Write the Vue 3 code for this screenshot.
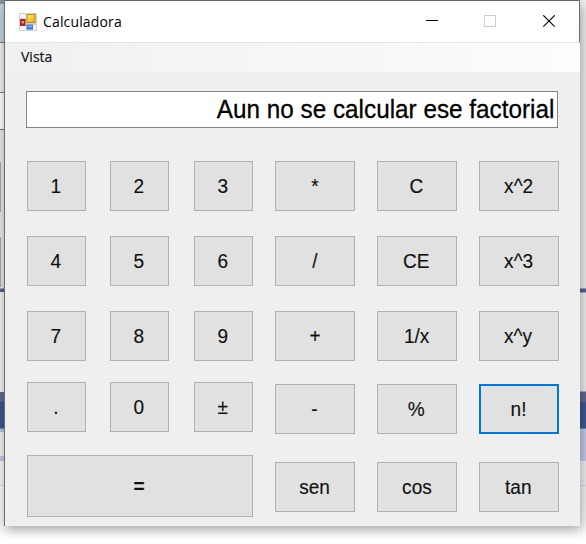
<script setup>
const digits = ['1', '2', '3', '4', '5', '6', '7', '8', '9', '.', '0', '±']
const operations = [
  '*', 'C', 'x^2',
  '/', 'CE', 'x^3',
  '+', '1/x', 'x^y',
  '-', '%', 'n!',
  'sen', 'cos', 'tan',
]
</script>

<template>
  <div class="desktop">
    <div class="edge edge-left"></div>
    <main class="window">
      <header class="titlebar">
        <svg class="app-icon" width="18" height="18" viewBox="0 0 18 18">
          <defs>
            <linearGradient id="gold" x1="0" y1="0" x2="1" y2="1">
              <stop offset="0" stop-color="#ffe680" />
              <stop offset="1" stop-color="#f0b000" />
            </linearGradient>
          </defs>
          <rect width="18" height="18" fill="#d2d2d2" />
          <rect x="1" y="1" width="6" height="4" fill="#f6f6f6" />
          <rect x="1" y="13" width="6" height="4" fill="#f6f6f6" />
          <rect x="14" y="12" width="3" height="5" fill="#f6f6f6" />
          <rect x="1" y="6" width="5.5" height="7" fill="#a92a24" />
          <rect x="2.5" y="8" width="2.5" height="2.5" fill="#e88a80" />
          <rect x="7.5" y="1" width="9" height="9" fill="#c08a10" />
          <rect x="8.5" y="2" width="7" height="7" fill="url(#gold)" />
          <rect x="7.5" y="11.5" width="6.5" height="5" fill="#3f74d0" />
          <rect x="8.5" y="12.5" width="4.5" height="2" fill="#78a8f4" />
        </svg>
        <h1 class="title">Calculadora</h1>
        <svg class="controls" width="131" height="14" viewBox="0 0 131 14">
          <path d="M0 5.5H12" stroke="#000" fill="none" />
          <rect x="58.5" y="0.5" width="11" height="11" stroke="#ccc" fill="none" />
          <path d="M117.3 0.3L128.7 11.7M128.7 0.3L117.3 11.7" stroke="#000" stroke-width="1.1" fill="none" />
        </svg>
      </header>
      <nav class="menu"><span class="menu-text">Vista</span></nav>
      <div class="display"><span class="display-text">Aun no se calcular ese factorial</span></div>
      <section class="keys">
        <div class="numbers">
          <button v-for="d in digits" :key="d" class="key"><span class="label">{{ d }}</span></button>
          <button class="key equals"><span class="label">=</span></button>
        </div>
        <div class="operations">
          <button v-for="o in operations" :key="o" class="key" :class="{ focused: o === 'n!' }"><span class="label">{{ o }}</span></button>
        </div>
      </section>
    </main>
    <div class="edge edge-right"></div>
  </div>
</template>

<style>
body {
  margin: 0;
  overflow: hidden;
  background: #fff;
}
</style>

<style scoped>
.desktop {
  box-sizing: border-box;
  display: flex;
  width: 586px;
  height: 544px;
  overflow: hidden;
  background: #fff;
}
.edge {
  height: 544px;
}
.edge-left {
  width: 4px;
  background:
    linear-gradient(#aaa, #aaa) 0 162px / 1px 50px no-repeat,
    linear-gradient(#aaa, #aaa) 0 237px / 1px 50px no-repeat,
    linear-gradient(
      #8d9299 4px, #c3d1df 4px 42px, #777 42px 43px, #f0f0f0 43px 92px, #888 92px 93px,
      #fff 93px 129px, #777 129px 130px, #eaeaec 130px 288px, #56658f 289px 292px,
      #f2f3f5 292px 392px, #5e6996 392px 402px, #40568e 402px 428px, #b9c6e4 429px 432px,
      #f2f2f5 432px 456px, #c3cae8 456px 461px, #f7f7fb 461px 485px, #dcdeee 485px 486px,
      #fafafa 486px 520px, #fff 540px);
}
.edge-right {
  width: 6px;
  background: linear-gradient(
    #f2f2f2, #ededed 20px 288px, #98a3c0 288px 289px, #53638f 289px 292px, #a2abc6 292px 293px,
    #eee 293px 391px, #a2abc6 391px 392px, #5e6892 392px 402px, #40568e 402px 428px,
    #7888b0 428px 429px, #c4cbe8 429px 461px, #f0f0f2 461px 485px, #d9dae8 485px 486px,
    #f2f2f2 486px 505px, #fff 541px);
}
.window {
  position: relative;
  box-sizing: border-box;
  width: 576px;
  height: 526px;
  border-left: 1px solid #6d6d6d;
  background: #efefef;
  box-shadow: 1px 4px 11px rgba(0, 0, 0, 0.36);
  font-family: "Liberation Sans", Arial, sans-serif;
}
.titlebar {
  box-sizing: border-box;
  display: flex;
  align-items: center;
  height: 43px;
  padding: 0 22px 0 14px;
  border-top: 1px solid #666;
  border-right: 1px solid #6d6d6d;
  border-bottom: 1px solid #e4e4e4;
  background: #fff;
}
.title {
  margin: 0 0 0 6px;
  font: 400 14px/20px "Open Sans", "Noto Sans", sans-serif;
  letter-spacing: 0.15px;
  color: #000;
}
.controls {
  margin-left: auto;
}
.menu {
  height: 29px;
  padding-left: 16px;
  background: linear-gradient(90deg, #f0f0f0, #fdfdfd);
  font: 400 14px/27px "Open Sans", "Noto Sans", sans-serif;
  color: #111;
}
.menu-text {
  display: inline-block;
  -webkit-text-stroke: 0.2px #111;
}
.display {
  box-sizing: border-box;
  width: 532px;
  height: 37px;
  margin: 19px 0 0 21px;
  padding-right: 3px;
  border: 1px solid #858585;
  background: #fff;
  font-size: 26px;
  line-height: 35px;
  text-align: right;
  white-space: nowrap;
  color: #000;
}
.display-text {
  display: inline-block;
  transform: scaleX(0.934);
  transform-origin: right;
  -webkit-text-stroke: 0.3px #000;
}
.keys {
  display: flex;
  gap: 22px;
  padding: 33px 0 0 22px;
}
.numbers {
  display: grid;
  grid-template-columns: 59px 59px 60px;
  grid-template-rows: 50px 50px 50px 50px 62px;
  column-gap: 24px;
  row-gap: 25px;
  width: 226px;
}
.numbers .key:nth-child(3n) {
  margin-left: 1px;
}
.numbers .key:nth-child(n + 10):nth-child(-n + 12) {
  margin-top: -4px;
  margin-bottom: 4px;
}
.operations {
  display: grid;
  grid-template-columns: repeat(3, 80px);
  grid-template-rows: repeat(5, 50px);
  column-gap: 22px;
  row-gap: 25px;
}
.key {
  display: flex;
  align-items: center;
  justify-content: center;
  box-sizing: border-box;
  min-width: 0;
  margin: 0;
  padding: 0;
  border: 1px solid #b0b0b0;
  background: #e1e1e1;
  font: 400 20.5px/24px "Liberation Sans", Arial, sans-serif;
  color: #111;
}
.label {
  margin-right: 1px;
  transform: scaleX(0.93);
  -webkit-text-stroke: 0.15px #111;
}
.numbers .equals {
  grid-column: 1 / 4;
  margin: -6px 0 6px;
  font-weight: 700;
}
.equals .label {
  margin-right: 3px;
}
.operations .key:nth-child(n + 10) {
  margin: -2px 0 2px;
}
.operations .key:nth-child(n + 13) {
  margin: 1px 0 -1px;
}
.operations .focused {
  border: 2px solid #0078d7;
}
</style>
